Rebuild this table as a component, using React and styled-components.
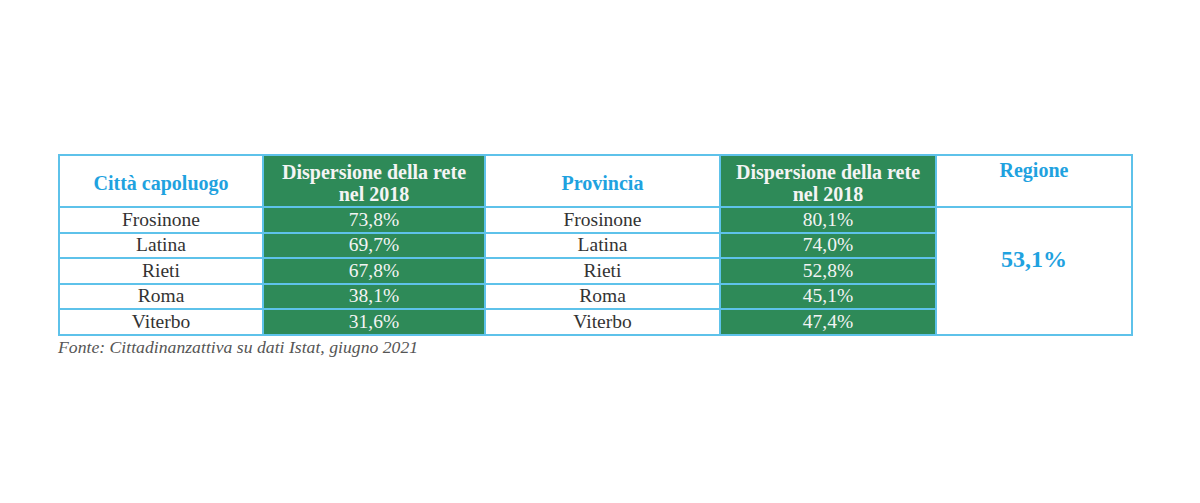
import React from 'react';
import styled, { createGlobalStyle } from 'styled-components';

const GlobalStyle = createGlobalStyle`
  body {
    margin: 0;
    background: #fff;
    font-family: "Liberation Serif", "Times New Roman", serif;
  }
`;

const Page = styled.div`
  width: 1200px;
  height: 503px;
  padding: 154px 0 0 58px;
  box-sizing: border-box;
`;

const Table = styled.table`
  border-collapse: collapse;
  table-layout: fixed;
  width: 1073px;
  border: 2px solid #5ec2ea;
`;

const HeadCell = styled.th`
  height: 47px;
  padding: 3px 4px 0;
  border: 2px solid #5ec2ea;
  font-size: 20px;
  line-height: 22px;
  font-weight: 700;
  text-align: center;
  vertical-align: ${(p) => (p.$top ? 'top' : 'middle')};
  color: ${(p) => (p.$green ? '#f4f4f4' : '#1fa2df')};
  background: ${(p) => (p.$green ? '#2e8a58' : '#fff')};
`;

const Cell = styled.td`
  height: 23.5px;
  padding: 0 4px;
  border: 2px solid #5ec2ea;
  font-size: 19.5px;
  line-height: 22px;
  text-align: center;
  color: ${(p) => (p.$green ? '#f4f4f4' : '#333')};
  background: ${(p) => (p.$green ? '#2e8a58' : '#fff')};
`;

const RegionCell = styled.td`
  border: 2px solid #5ec2ea;
  text-align: center;
  vertical-align: middle;
  padding-bottom: 24px;
  font-size: 24px;
  font-weight: 700;
  color: #1fa2df;
  background: #fff;
`;

const Caption = styled.div`
  margin-top: 1px;
  font-size: 17.7px;
  font-style: italic;
  color: #555;
`;

const rows = [
  ['Frosinone', '73,8%', 'Frosinone', '80,1%'],
  ['Latina', '69,7%', 'Latina', '74,0%'],
  ['Rieti', '67,8%', 'Rieti', '52,8%'],
  ['Roma', '38,1%', 'Roma', '45,1%'],
  ['Viterbo', '31,6%', 'Viterbo', '47,4%'],
];

export default function App() {
  return (
    <Page>
      <GlobalStyle />
      <Table>
        <colgroup>
          <col style={{ width: 204 }} />
          <col style={{ width: 222 }} />
          <col style={{ width: 235 }} />
          <col style={{ width: 216 }} />
          <col style={{ width: 196 }} />
        </colgroup>
        <thead>
          <tr>
            <HeadCell>Città capoluogo</HeadCell>
            <HeadCell $green>Dispersione della rete nel 2018</HeadCell>
            <HeadCell>Provincia</HeadCell>
            <HeadCell $green>Dispersione della rete nel 2018</HeadCell>
            <HeadCell $top>Regione</HeadCell>
          </tr>
        </thead>
        <tbody>
          {rows.map((r, i) => (
            <tr key={r[0]}>
              <Cell>{r[0]}</Cell>
              <Cell $green>{r[1]}</Cell>
              <Cell>{r[2]}</Cell>
              <Cell $green>{r[3]}</Cell>
              {i === 0 && <RegionCell rowSpan={5}>53,1%</RegionCell>}
            </tr>
          ))}
        </tbody>
      </Table>
      <Caption>Fonte: Cittadinanzattiva su dati Istat, giugno 2021</Caption>
    </Page>
  );
}
